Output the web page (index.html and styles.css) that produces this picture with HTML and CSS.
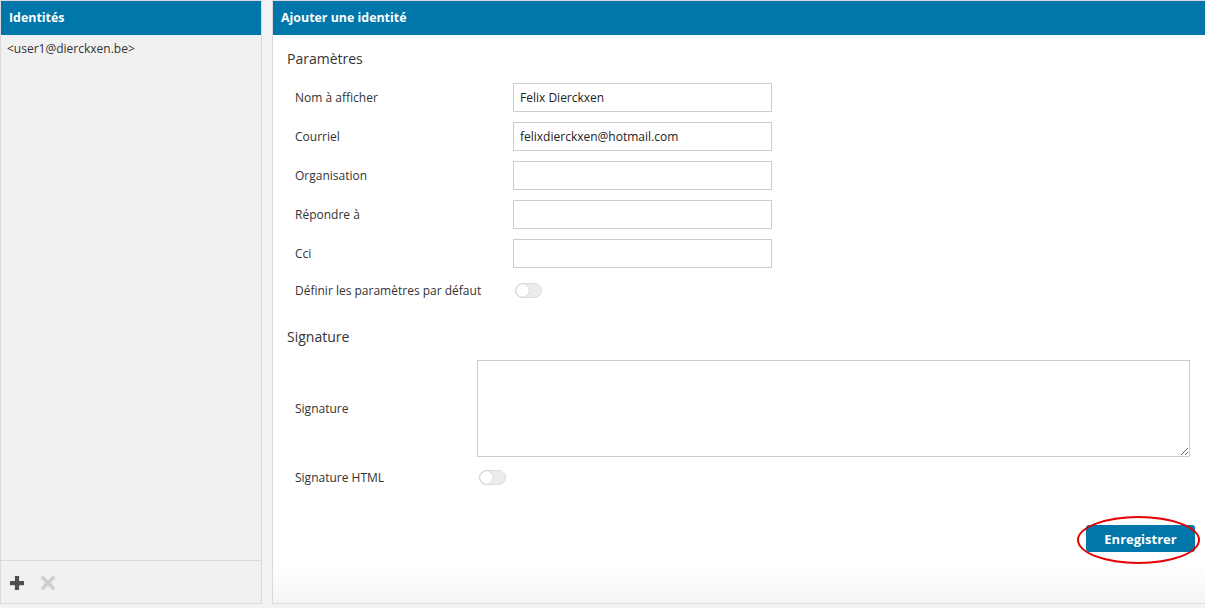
FILE: index.html
```html
<!DOCTYPE html>
<html lang="fr">
<head>
<meta charset="utf-8">
<title>Identités</title>
<link rel="stylesheet" href="styles.css">
</head>
<body>
<div class="app">
  <aside class="panel side">
    <div class="panel-head">Identités</div>
    <ul class="id-list">
      <li>&lt;user1@dierckxen.be&gt;</li>
    </ul>
    <div class="side-foot">
      <svg class="ico add" width="14" height="14" viewBox="0 0 14 14"><rect x="0" y="5" width="14" height="4.2" fill="#505050"/><rect x="4.9" y="0" width="4.2" height="14" fill="#505050"/></svg>
      <svg class="ico del" width="14" height="14" viewBox="0 0 14 14"><path d="M2 2 L12 12 M12 2 L2 12" stroke="#cfcfcf" stroke-width="3.6" stroke-linecap="square"/></svg>
    </div>
  </aside>
  <main class="panel main">
    <div class="panel-head">Ajouter une identité</div>
    <div class="content">
      <h2 class="section-title">Paramètres</h2>
      <div class="form-grid">
        <label class="lbl">Nom à afficher</label>
        <input class="field" type="text" value="Felix Dierckxen">
        <label class="lbl">Courriel</label>
        <input class="field" type="text" value="felixdierckxen@hotmail.com">
        <label class="lbl">Organisation</label>
        <input class="field" type="text" value="">
        <label class="lbl">Répondre à</label>
        <input class="field" type="text" value="">
        <label class="lbl">Cci</label>
        <input class="field" type="text" value="">
        <label class="lbl">Définir les paramètres par défaut</label>
        <div class="toggle-cell"><span class="toggle"></span></div>
      </div>
      <h2 class="section-title sig-title">Signature</h2>
      <div class="sig-grid">
        <label class="lbl">Signature</label>
        <textarea class="sig-area"></textarea>
        <label class="lbl">Signature HTML</label>
        <div class="toggle-cell"><span class="toggle"></span></div>
      </div>
      <div class="actions">
        <button class="btn" type="button">Enregistrer</button>
        <span class="ring"></span>
      </div>
    </div>
  </main>
</div>
</body>
</html>
```
FILE: styles.css
```css
* { box-sizing: border-box; }
html, body { margin: 0; padding: 0; }
body {
  width: 1205px;
  height: 608px;
  overflow: hidden;
  background: #f3f3f3;
  font-family: "Open Sans", "Noto Sans", sans-serif;
  color: #333;
  font-size: 12px;
}
.app {
  display: flex;
  gap: 10px;
  align-items: flex-start;
}
.panel {
  height: 604px;
  border: 1px solid #dadada;
  display: flex;
  flex-direction: column;
}
.side {
  width: 262px;
  flex: none;
  background: #f1f1f1;
}
.main {
  width: 934px;
  flex: none;
  background: linear-gradient(to bottom, #fff calc(100% - 40px), #f5f5f5 100%);
}
.panel-head {
  height: 34px;
  background: #0076ab;
  color: #fff;
  font-weight: 700;
  font-size: 12.4px;
  line-height: 34px;
  padding-left: 8px;
  flex: none;
}
.id-list {
  list-style: none;
  margin: 0;
  padding: 6px 6px;
  flex: 1;
}
.id-list li { line-height: 16px; font-size: 12px; color: #333; }
.side-foot {
  height: 43px;
  border-top: 1px solid #dadada;
  display: flex;
  align-items: center;
  gap: 17px;
  padding: 2px 0 0 9px;
  flex: none;
}
.ico { display: block; }
.content {
  padding: 14px 14px 0 14px;
  flex: 1;
}
.section-title {
  margin: 0 0 9px 0;
  font-size: 14px;
  font-weight: 400;
  line-height: 20px;
  color: #333;
}
.form-grid {
  display: grid;
  grid-template-columns: 218px 259px;
  grid-template-rows: repeat(5, 39px) 34px;
  align-items: center;
  padding-left: 8px;
}
.toggle-cell { display: flex; align-items: center; }
.lbl { font-size: 12px; color: #333; }
.field {
  height: 29px;
  width: 259px;
  border: 1px solid #cccccc;
  border-radius: 0;
  padding: 0 6px;
  font-family: "Open Sans", "Noto Sans", sans-serif;
  font-size: 12px;
  color: #222;
  outline: none;
}
.toggle {
  display: inline-block;
  position: relative;
  width: 27px;
  height: 15px;
  border-radius: 8px;
  background: #ececec;
  border: 1px solid #dcdcdc;
  margin-left: 2px;
}
.toggle::after {
  content: "";
  position: absolute;
  left: 0;
  top: 0;
  width: 13px;
  height: 13px;
  border-radius: 50%;
  background: #fff;
  box-shadow: 0 0 1px rgba(0,0,0,0.35);
}
.sig-title { margin: 20px 0 13px 0; }
.sig-grid {
  display: grid;
  grid-template-columns: 182px 713px;
  grid-template-rows: 97px 40px;
  align-items: center;
  padding-left: 8px;
}
.sig-area {
  width: 713px;
  height: 97px;
  border: 1px solid #cccccc;
  border-radius: 0;
  display: block;
  outline: none;
}
.actions {
  position: relative;
  display: flex;
  justify-content: flex-end;
  margin-right: -4px;
  margin-top: 28px;
}
.btn {
  width: 109px;
  height: 27px;
  background: #0076ab;
  border: none;
  border-radius: 3px;
  color: #fff;
  font-family: "Open Sans", "Noto Sans", sans-serif;
  font-weight: 700;
  font-size: 13px;
  padding: 0;
}
.ring {
  position: absolute;
  right: -5px;
  top: -9px;
  width: 123px;
  height: 48px;
  border: 2px solid #e30000;
  border-radius: 50%;
  pointer-events: none;
}
```
